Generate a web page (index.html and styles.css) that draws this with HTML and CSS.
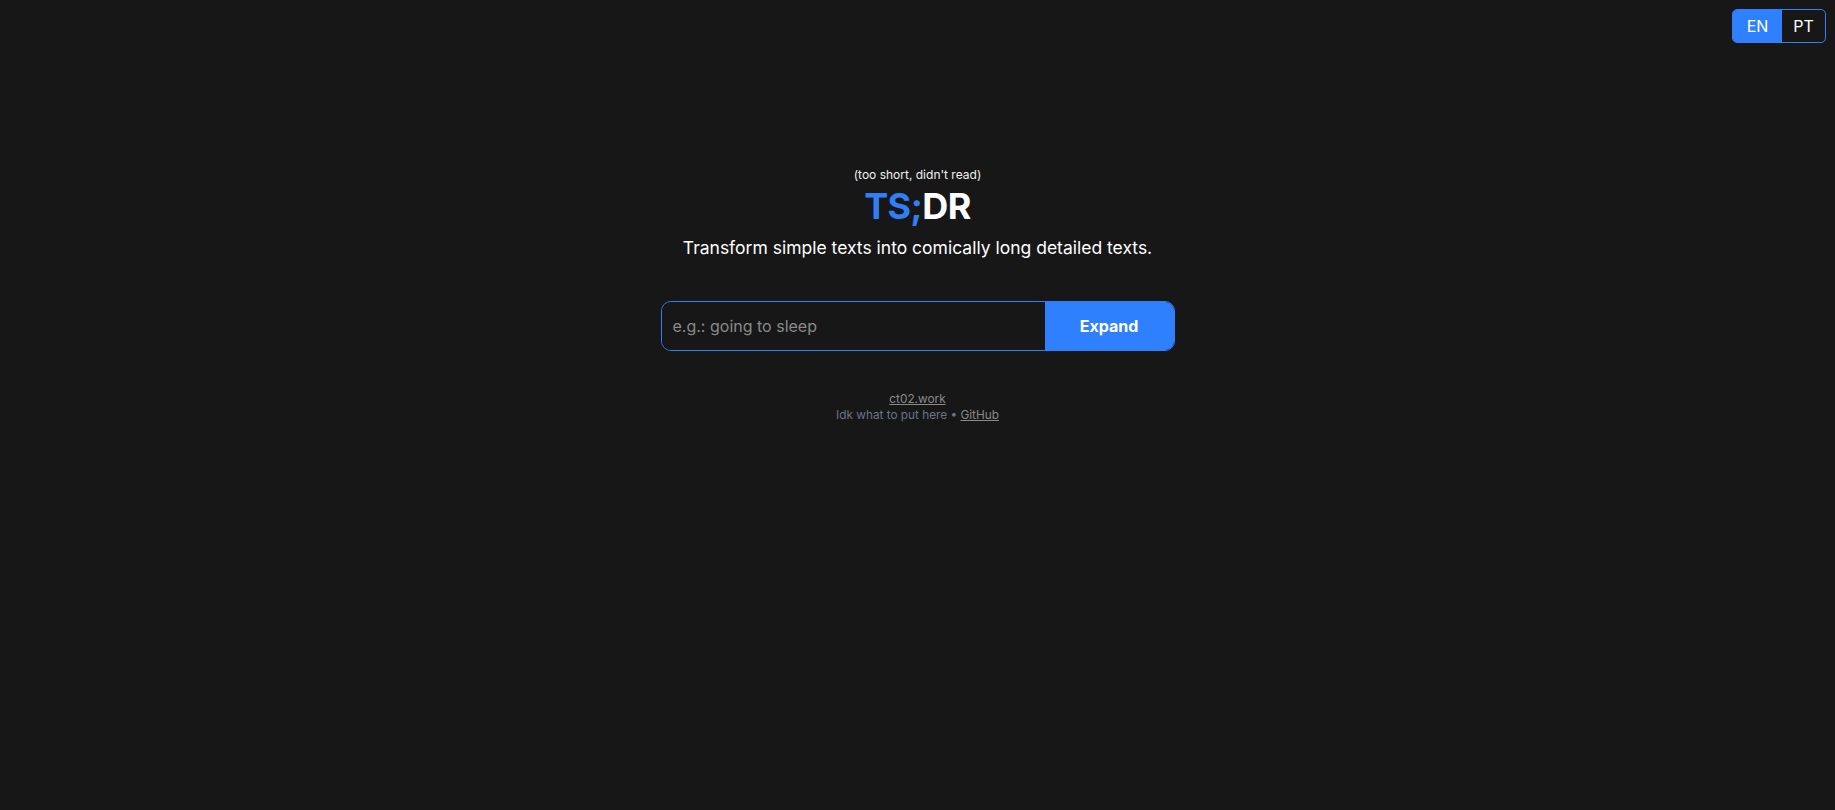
FILE: index.html
```html
<!DOCTYPE html>
<html lang="en">
<head>
<meta charset="utf-8">
<title>TS;DR</title>
<link rel="stylesheet" href="styles.css">
</head>
<body>
  <div class="lang-switch">
    <button class="lang active">EN</button>
    <button class="lang">PT</button>
  </div>
  <main class="hero">
    <p class="tagline">(too short, didn't read)</p>
    <h1 class="title"><span class="blue">TS;</span>DR</h1>
    <p class="subtitle">Transform simple texts into comically long detailed texts.</p>
    <form class="expand-form">
      <input class="expand-input" type="text" placeholder="e.g.: going to sleep">
      <button class="expand-btn" type="button">Expand</button>
    </form>
    <footer class="foot">
      <a class="foot-link" href="#">ct02.work</a>
      <div class="foot-line">Idk what to put here • <a class="foot-link" href="#">GitHub</a></div>
    </footer>
  </main>
</body>
</html>
```
FILE: styles.css
```css
* { box-sizing: border-box; }
html, body { margin: 0; padding: 0; }
body {
  background: #171717;
  color: #ffffff;
  font-family: Inter, "Liberation Sans", sans-serif;
  min-height: 810px;
}
.lang-switch {
  position: absolute;
  top: 9px;
  right: 9px;
  display: flex;
  border: 1px solid #2f80ff;
  border-radius: 5px;
  overflow: hidden;
  height: 34px;
}
.lang {
  border: 0;
  background: transparent;
  color: #fff;
  font-family: Inter, "Liberation Sans", sans-serif;
  font-size: 16px;
  padding: 0 11px;
  height: 100%;
}
.lang.active { background: #2f80ff; width: 49px; }
.lang:not(.active) { width: 43px; }
.hero {
  display: flex;
  flex-direction: column;
  align-items: center;
  padding-top: 167px;
}
.tagline {
  margin: 0;
  font-size: 12px;
  line-height: 16px;
  color: #f2f2f2;
}
.title {
  margin: 3px 0 0;
  font-size: 36px;
  line-height: 40px;
  font-weight: 700;
  letter-spacing: -0.6px;
}
.blue { color: #2f7ff7; }
.subtitle {
  margin: 8px 0 0;
  font-size: 17.5px;
  line-height: 28px;
}
.expand-form {
  margin-top: 39px;
  display: flex;
  width: 514px;
  height: 50px;
  border: 1px solid #2f7ff7;
  border-radius: 10px;
  overflow: hidden;
}
.expand-input {
  flex: 1;
  min-width: 0;
  background: #171717;
  border: 0;
  outline: none;
  color: #fff;
  padding: 0 11px;
  font-family: Inter, "Liberation Sans", sans-serif;
  font-size: 16px;
}
.expand-input::placeholder { color: #8a8a8a; }
.expand-btn {
  width: 129px;
  border: 0;
  background: #2f80ff;
  color: #fff;
  font-family: Inter, "Liberation Sans", sans-serif;
  font-size: 16px;
  font-weight: 700;
}
.foot {
  margin-top: 40px;
  display: flex;
  flex-direction: column;
  align-items: center;
  font-size: 11.8px;
  line-height: 16px;
}
.foot-line { color: #6b7488; }
.foot-link { color: #8a8a8a; text-decoration: underline; }
```
